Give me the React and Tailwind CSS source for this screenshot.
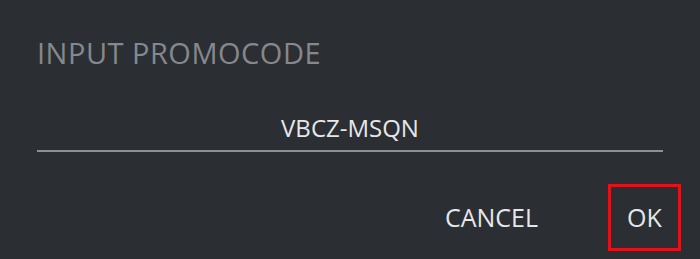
import { useState } from "react";

const font = { fontFamily: '"Open Sans", "Noto Sans", sans-serif' };

export default function App() {
  const [code, setCode] = useState("VBCZ-MSQN");

  return (
    <div
      className="flex h-[259px] w-[700px] flex-col bg-[#2b2e33] text-white"
      style={font}
    >
      <h2 className="mt-[38px] px-[37px] text-[29px] leading-none font-normal tracking-[0.5px] text-[#85888d]">
        INPUT PROMOCODE
      </h2>

      <div className="mt-[47px] px-[37px]">
        <input
          value={code}
          onChange={(e) => setCode(e.target.value)}
          className="block h-[38px] w-[626px] border-b-2 border-[#8d8f92] bg-transparent pb-[10px] text-center text-[24px] leading-none text-[#e6e7e8] outline-none"
        />
      </div>

      <div className="mt-[32px] flex items-center justify-end pr-[19px]">
        <button
          type="button"
          className="mr-[70px] text-[25px] leading-none text-[#e6e7e8]"
        >
          CANCEL
        </button>
        <button
          type="button"
          className="flex h-[67px] w-[73px] items-center justify-center border-[3px] border-[#e0121a] text-[25px] leading-none text-[#e6e7e8]"
        >
          OK
        </button>
      </div>
    </div>
  );
}
